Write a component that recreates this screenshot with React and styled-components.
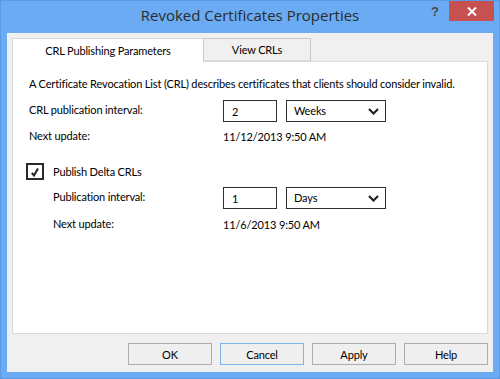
import React from 'react';
import styled, { createGlobalStyle } from 'styled-components';

const GlobalStyle = createGlobalStyle`
  html, body {
    margin: 0;
    padding: 0;
    background: #ffffff;
  }

  body {
    font-family: Lato, "Liberation Sans", Arial, sans-serif;
    font-size: 11px;
    color: #000;
  }
`;

const Window = styled.div`
  box-sizing: border-box;
  width: 500px;
  height: 379px;
  display: flex;
  flex-direction: column;
  background: #6aabf4;
  border: 1px solid #5b9be3;
`;

const TitleBar = styled.div`
  height: 32px;
  display: grid;
  grid-template-columns: 1fr auto 1fr;
  align-items: start;
`;

const Title = styled.div`
  grid-column: 2;
  padding-top: 4px;
  font-family: "Open Sans", "Liberation Sans", sans-serif;
  font-size: 15px;
  color: #2b2b2b;
  white-space: nowrap;
`;

const Controls = styled.div`
  grid-column: 3;
  justify-self: end;
  display: flex;
  align-items: flex-start;
  margin-right: 5px;
`;

const HelpGlyph = styled.div`
  width: 28px;
  padding-top: 3px;
  text-align: center;
  font-family: "Liberation Sans", sans-serif;
  font-weight: bold;
  font-size: 13px;
  color: #4a4a4a;
`;

const CloseButton = styled.div`
  width: 45px;
  height: 20px;
  display: flex;
  align-items: center;
  justify-content: center;
  background: #c75050;
`;

const Client = styled.div`
  flex: 1;
  margin: 0 6px 6px;
  padding: 5px 5px 0;
  background: #f0f0f0;
  display: flex;
  flex-direction: column;
  font-family: Lato, "Liberation Sans", sans-serif;
  font-size: 11px;
  letter-spacing: -0.15px;
  color: #000;
`;

const TabStrip = styled.div`
  display: flex;
  height: 23px;
  position: relative;
  z-index: 1;
`;

const Tab = styled.div`
  box-sizing: border-box;
  width: ${(p) => p.$width}px;
  height: ${(p) => (p.$active ? 24 : 23)}px;
  display: flex;
  align-items: center;
  justify-content: center;
  background: ${(p) => (p.$active ? '#ffffff' : '#f0f0f0')};
  border: 1px solid ${(p) => (p.$active ? '#d9d9d9' : '#c9c9c9')};
  border-bottom: ${(p) => (p.$active ? 'none' : '1px solid #d9d9d9')};
  margin-left: ${(p) => (p.$active ? 0 : -1)}px;
`;

const Panel = styled.div`
  box-sizing: border-box;
  height: 273px;
  background: #ffffff;
  border: 1px solid #d9d9d9;
  padding: 14px 16px 0;
  display: flex;
  flex-direction: column;
`;

const Text = styled.div`
  line-height: 16px;
  white-space: nowrap;
`;

const Row = styled.div`
  display: grid;
  grid-template-columns: ${(p) => 185 - (p.$indent || 0)}px auto auto;
  column-gap: 9px;
  align-items: center;
  justify-content: start;
  margin-top: ${(p) => p.$top || 0}px;
  padding-left: ${(p) => p.$indent || 0}px;
  line-height: 16px;
`;

const Label = styled.div`
  white-space: nowrap;
  padding-bottom: 2px;
`;

const TextBox = styled.div`
  box-sizing: border-box;
  width: 54px;
  height: 22px;
  border: 1px solid #2f2f2f;
  padding: 1px 8px 0;
  display: flex;
  align-items: center;
`;

const Select = styled.div`
  box-sizing: border-box;
  width: 100px;
  height: 22px;
  border: 1px solid #2f2f2f;
  padding: 0 6px 0 7px;
  display: flex;
  align-items: center;
  justify-content: space-between;
`;

const CheckRow = styled.div`
  display: flex;
  align-items: center;
  gap: 9px;
  margin-top: ${(p) => p.$top || 0}px;
  margin-left: -3px;
`;

const CheckBox = styled.div`
  box-sizing: border-box;
  width: 18px;
  height: 17px;
  border: 2px solid #2b2b2b;
  display: flex;
  align-items: center;
  justify-content: center;
`;

const ButtonBar = styled.div`
  display: flex;
  justify-content: flex-end;
  gap: 8px;
  padding-top: 9px;
`;

const Button = styled.div`
  box-sizing: border-box;
  width: 84px;
  height: 22px;
  display: flex;
  align-items: center;
  justify-content: center;
  background: #efefef;
  border: 1px solid ${(p) => (p.$focused ? '#7fb4ea' : '#adadad')};
`;

const Chevron = () => (
  <svg width="11" height="7" viewBox="0 0 11 7">
    <path d="M1 1 L5.5 5.5 L10 1" fill="none" stroke="#222" strokeWidth="2.2" />
  </svg>
);

const Tick = () => (
  <svg width="10" height="10" viewBox="0 0 10 10">
    <path d="M1.8 5.8 L4 8.5 L8 1.5" fill="none" stroke="#222" strokeWidth="2" />
  </svg>
);

const CloseX = () => (
  <svg width="10" height="9" viewBox="0 0 10 9">
    <path d="M1 0.5 L9 8.5 M9 0.5 L1 8.5" stroke="#fff" strokeWidth="2" />
  </svg>
);

const IntervalRow = ({ label, count, unit, indent, top }) => (
  <Row $indent={indent} $top={top}>
    <Label>{label}</Label>
    <TextBox>{count}</TextBox>
    <Select>
      <span>{unit}</span>
      <Chevron />
    </Select>
  </Row>
);

const UpdateRow = ({ value, indent, top }) => (
  <Row $indent={indent} $top={top}>
    <Label>Next update:</Label>
    <span>{value}</span>
  </Row>
);

const App = () => (
  <>
    <GlobalStyle />
    <Window>
      <TitleBar>
        <Title>Revoked Certificates Properties</Title>
        <Controls>
          <HelpGlyph>?</HelpGlyph>
          <CloseButton>
            <CloseX />
          </CloseButton>
        </Controls>
      </TitleBar>
      <Client>
        <TabStrip>
          <Tab $active $width={192}>CRL Publishing Parameters</Tab>
          <Tab $width={108}>View CRLs</Tab>
        </TabStrip>
        <Panel>
          <Text>
            A Certificate Revocation List (CRL) describes certificates that clients should consider invalid.
          </Text>
          <IntervalRow label="CRL publication interval:" count="2" unit="Weeks" top={8} />
          <UpdateRow value="11/12/2013 9:50 AM" top={6} />
          <CheckRow $top={17}>
            <CheckBox>
              <Tick />
            </CheckBox>
            <span>Publish Delta CRLs</span>
          </CheckRow>
          <IntervalRow label="Publication interval:" count="1" unit="Days" indent={24} top={7} />
          <UpdateRow value="11/6/2013 9:50 AM" indent={24} top={7} />
        </Panel>
        <ButtonBar>
          <Button>OK</Button>
          <Button $focused>Cancel</Button>
          <Button>Apply</Button>
          <Button>Help</Button>
        </ButtonBar>
      </Client>
    </Window>
  </>
);

export default App;
